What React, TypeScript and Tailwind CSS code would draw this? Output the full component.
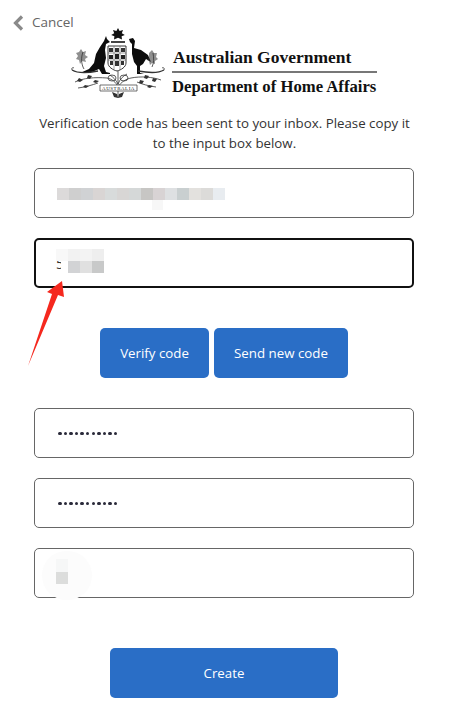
import React from 'react';

const emailCells = ['#dcdada', '#cfcfcf', '#d0d2d4', '#d9d5d4', '#d8dbdb', '#d8d6d5', '#d5d8d8', '#c7c6c4', '#d8d3d4', '#dee0e2', '#c9cfd0', '#e3e1de', '#dcdbd9', '#e8ecf0'];
const codeTop = ['#f8f8f8', '#f2f2f2', '#f3f3f3', '#eeeeee'];
const codeBottom = ['transparent', '#d2d3d5', '#e0e0e0', '#c8c9c9'];

function Emblem() {
  return (
    <svg viewBox="70 27 95 73" className="w-[95px] h-[73px] shrink-0">
      {/* star */}
      <path d="M118 28l1.600 3 3.400-1-1.200 3.300 3 1.700-3.200 1.200.4 3.400-4-1.800-4 1.800.4-3.400-3.200-1.200 3-1.700-1.200-3.300 3.400 1z" fill="#111" />
      <rect x="111" y="41" width="14" height="2" fill="#444" />
      {/* kangaroo */}
      <path d="M106 36L107 39L110 42L106 44L105 50L106 58L104 66L106 72L110 73L110 74L102 74L99 69L92 72L80 73L89 69L94 63L96 54L100 47L104 41Z" fill="#0c0c0c" />
      {/* emu */}
      <path d="M129 39L133 38L135 41L134 48L141 50L148 55L151 62L146 59L143 64L140 66L140 73L144 74L137 74L137 66L134 62L132 54L132 44L130 42Z" fill="#0c0c0c" />
      {/* shield */}
      <path d="M108 46h18v17c0 4-5 7-9 8-4-1-9-4-9-8z" fill="#fff" stroke="#222" strokeWidth=".9" />
      <path d="M108 53h18M108 60h18M114 46v23M120 46v24" stroke="#666" strokeWidth=".6" />
      <path d="M109 48h4v4h-4zM115 48h4v4h-4zM121 48h4v4h-4z" fill="#333" />
      <path d="M109 55h4v4h-4zM115 54h4v5h-4zM121 55h4v4h-4z" fill="#222" />
      <path d="M110 61h3v4h-3zM115 61h4v5h-4zM121 61h3v4h-3z" fill="#333" />
      {/* foliage */}
      <g fill="none" stroke="#333" strokeWidth=".8">
        <path d="M72 70c5 3 16 3 26 1M164 70c-5 3-15 3-26 1" strokeWidth="1.300" />
        <path d="M72 70c-1-2 1-3 2-2M164 70c1-2-1-3-2-2" />
        <path d="M84 69c-3-5-3-12-1-17M152 67c2-4 2-9 1-14" />
        <path d="M75 82c8-4 20-5 32-4 5 1 9 4 11 9M161 80c-8-3-20-4-30-2-5 1-10 4-13 9" />
        <path d="M78 88c8-1 14-3 20-5M156 87c-8-1-14-3-19-5" />
        <path d="M118 71v27M110 75c3 2 6 5 8 9M127 74c-4 2-7 5-9 10" />
        <ellipse cx="112" cy="78" rx="4" ry="3" />
        <ellipse cx="124" cy="78" rx="4" ry="3" />
      </g>
      <g fill="#333">
        <path d="M79 52l2-3 2 3 3-1-1 4 3 2-3 2 1 3-4-1-2 3-1-4-3-1 2-3-2-3z" opacity=".55" />
        <path d="M149 53l3-3 2 3 3 0-1 4 2 2-3 2 0 3-3-1-2 2-1-4-2-1 2-3z" opacity=".55" />
        <path d="M79 78l4 2-3 2-3-1zM88 75l4 1-2 3-3-1zM95 80l4 1-3 2-3-1zM85 85l4 1-3 2-3-1zM145 75l4 1-2 3-3-1zM153 78l4 1-2 3-3-1zM140 80l4 1-2 3-3-1zM149 85l4 1-3 2-3-1z" />
        <path d="M112 92l5 2 1 4-4-1zM124 92l-5 2-1 4 4-1z" />
      </g>
      {/* banner */}
      <path d="M100 85h37v6h-37z" fill="#fff" stroke="#333" strokeWidth=".7" />
      <text x="118.500" y="90" textAnchor="middle" fontSize="5" fontFamily="'Liberation Serif', serif" fill="#222" letterSpacing=".5">AUSTRALIA</text>
    </svg>
  );
}

function Field({ children, focused }: { children?: React.ReactNode; focused?: boolean }) {
  return (
    <div
      className={`relative h-[50px] w-[380px] flex items-center bg-white rounded-[5px] ${
        focused ? 'border-2 border-[#111] pl-[21px]' : 'border border-[#666] pl-[22px]'
      }`}
    >
      {children}
    </div>
  );
}

function Dots() {
  return (
    <div className="flex gap-[2.100px] mt-[1px] ml-[1px]">
      {Array.from({ length: 11 }).map((_, i) => (
        <span key={i} className="w-[3.500px] h-[3.500px] rounded-full bg-[#2a2a3a]" />
      ))}
    </div>
  );
}

export default function App() {
  return (
    <div className="relative w-[449px] h-[728px] overflow-hidden bg-white font-['Open_Sans',sans-serif] text-[#333]">
      <div className="flex items-center h-[16px] mt-[15px] ml-[13px] text-[#666] text-[13.500px] leading-none">
        <svg viewBox="0 0 11 16" className="w-[11px] h-[16px] shrink-0 overflow-visible">
          <path d="M9 1.500L2.500 8L9 14.500" fill="none" stroke="#8a8a8a" strokeWidth="3.200" />
        </svg>
        <span className="ml-[8px]">Cancel</span>
      </div>

      <div className="flex items-start ml-[70px] -mt-[4px]">
        <Emblem />
        <div className="ml-[7px] mt-[22px] w-[205px] font-['Liberation_Serif',serif] font-bold text-[#111] text-[17.500px] leading-none">
          <div className="pl-[1px] h-[22px] whitespace-nowrap">Australian Government</div>
          <div className="h-[2px] bg-[#777] mb-[6px]" />
          <div className="whitespace-nowrap text-[16.700px]">Department of Home Affairs</div>
        </div>
      </div>

      <p className="mt-[13px] text-center text-[13.300px] leading-[20px] text-[#333]">
        Verification code has been sent to your inbox. Please copy it
        <br />
        to the input box below.
      </p>

      <div className="flex flex-col gap-[20px] ml-[34px] mt-[15px]">
        <Field>
          <span className="absolute left-[117px] top-[31px] w-[11px] h-[10px] bg-[#f7f7f7]" />
          <div className="flex mt-[1px]">
            {emailCells.map((c, i) => (
              <span key={i} className="w-[12px] h-[12px]" style={{ backgroundColor: c }} />
            ))}
          </div>
        </Field>
        <Field focused>
          <span className="absolute left-[20px] top-[13px] text-[14px] text-[#333]">5</span>
          <span className="absolute left-[25px] top-[10px] w-[8px] h-[24px] bg-white" />
          <div className="absolute left-[20px] top-[9px] flex flex-col">
            <div className="flex">
              {codeTop.map((c, i) => (
                <span key={i} className="w-[12px] h-[12px]" style={{ backgroundColor: c }} />
              ))}
            </div>
            <div className="flex">
              {codeBottom.map((c, i) => (
                <span key={i} className="w-[12px] h-[12px]" style={{ backgroundColor: c }} />
              ))}
            </div>
          </div>
        </Field>
      </div>

      <div className="flex gap-[5px] ml-[100px] mt-[40px] text-[13.300px] text-white">
        <button className="w-[109px] h-[50px] pt-[1px] rounded-[5px] bg-[#2a6ec6]">Verify code</button>
        <button className="w-[134px] h-[50px] pt-[1px] rounded-[5px] bg-[#2a6ec6]">Send new code</button>
      </div>

      <div className="flex flex-col gap-[20px] ml-[34px] mt-[30px]">
        <Field>
          <Dots />
        </Field>
        <Field>
          <Dots />
        </Field>
        <Field>
          {/* blur smudge over the value */}
          <span className="absolute left-[7px] top-[2px] w-[50px] h-[49px] rounded-full bg-[#fcfcfc]" />
          <span className="absolute left-[21px] top-[10px] w-[12px] h-[13px] bg-[#f6f7f7]" />
          <span className="absolute left-[21px] top-[23px] w-[12px] h-[12px] bg-[#dcdddc]" />
        </Field>
      </div>

      <button className="block w-[228px] h-[50px] pt-[1px] rounded-[5px] bg-[#2a6ec6] text-white text-[13.300px] ml-[110px] mt-[50px]">
        Create
      </button>

      {/* red annotation arrow */}
      <svg viewBox="0 0 449 728" className="absolute inset-0 w-[449px] h-[728px] pointer-events-none">
        <path d="M28 366L52 294L47 292L62 281L64 297L58 295Z" fill="#f5281e" />
      </svg>
    </div>
  );
}
